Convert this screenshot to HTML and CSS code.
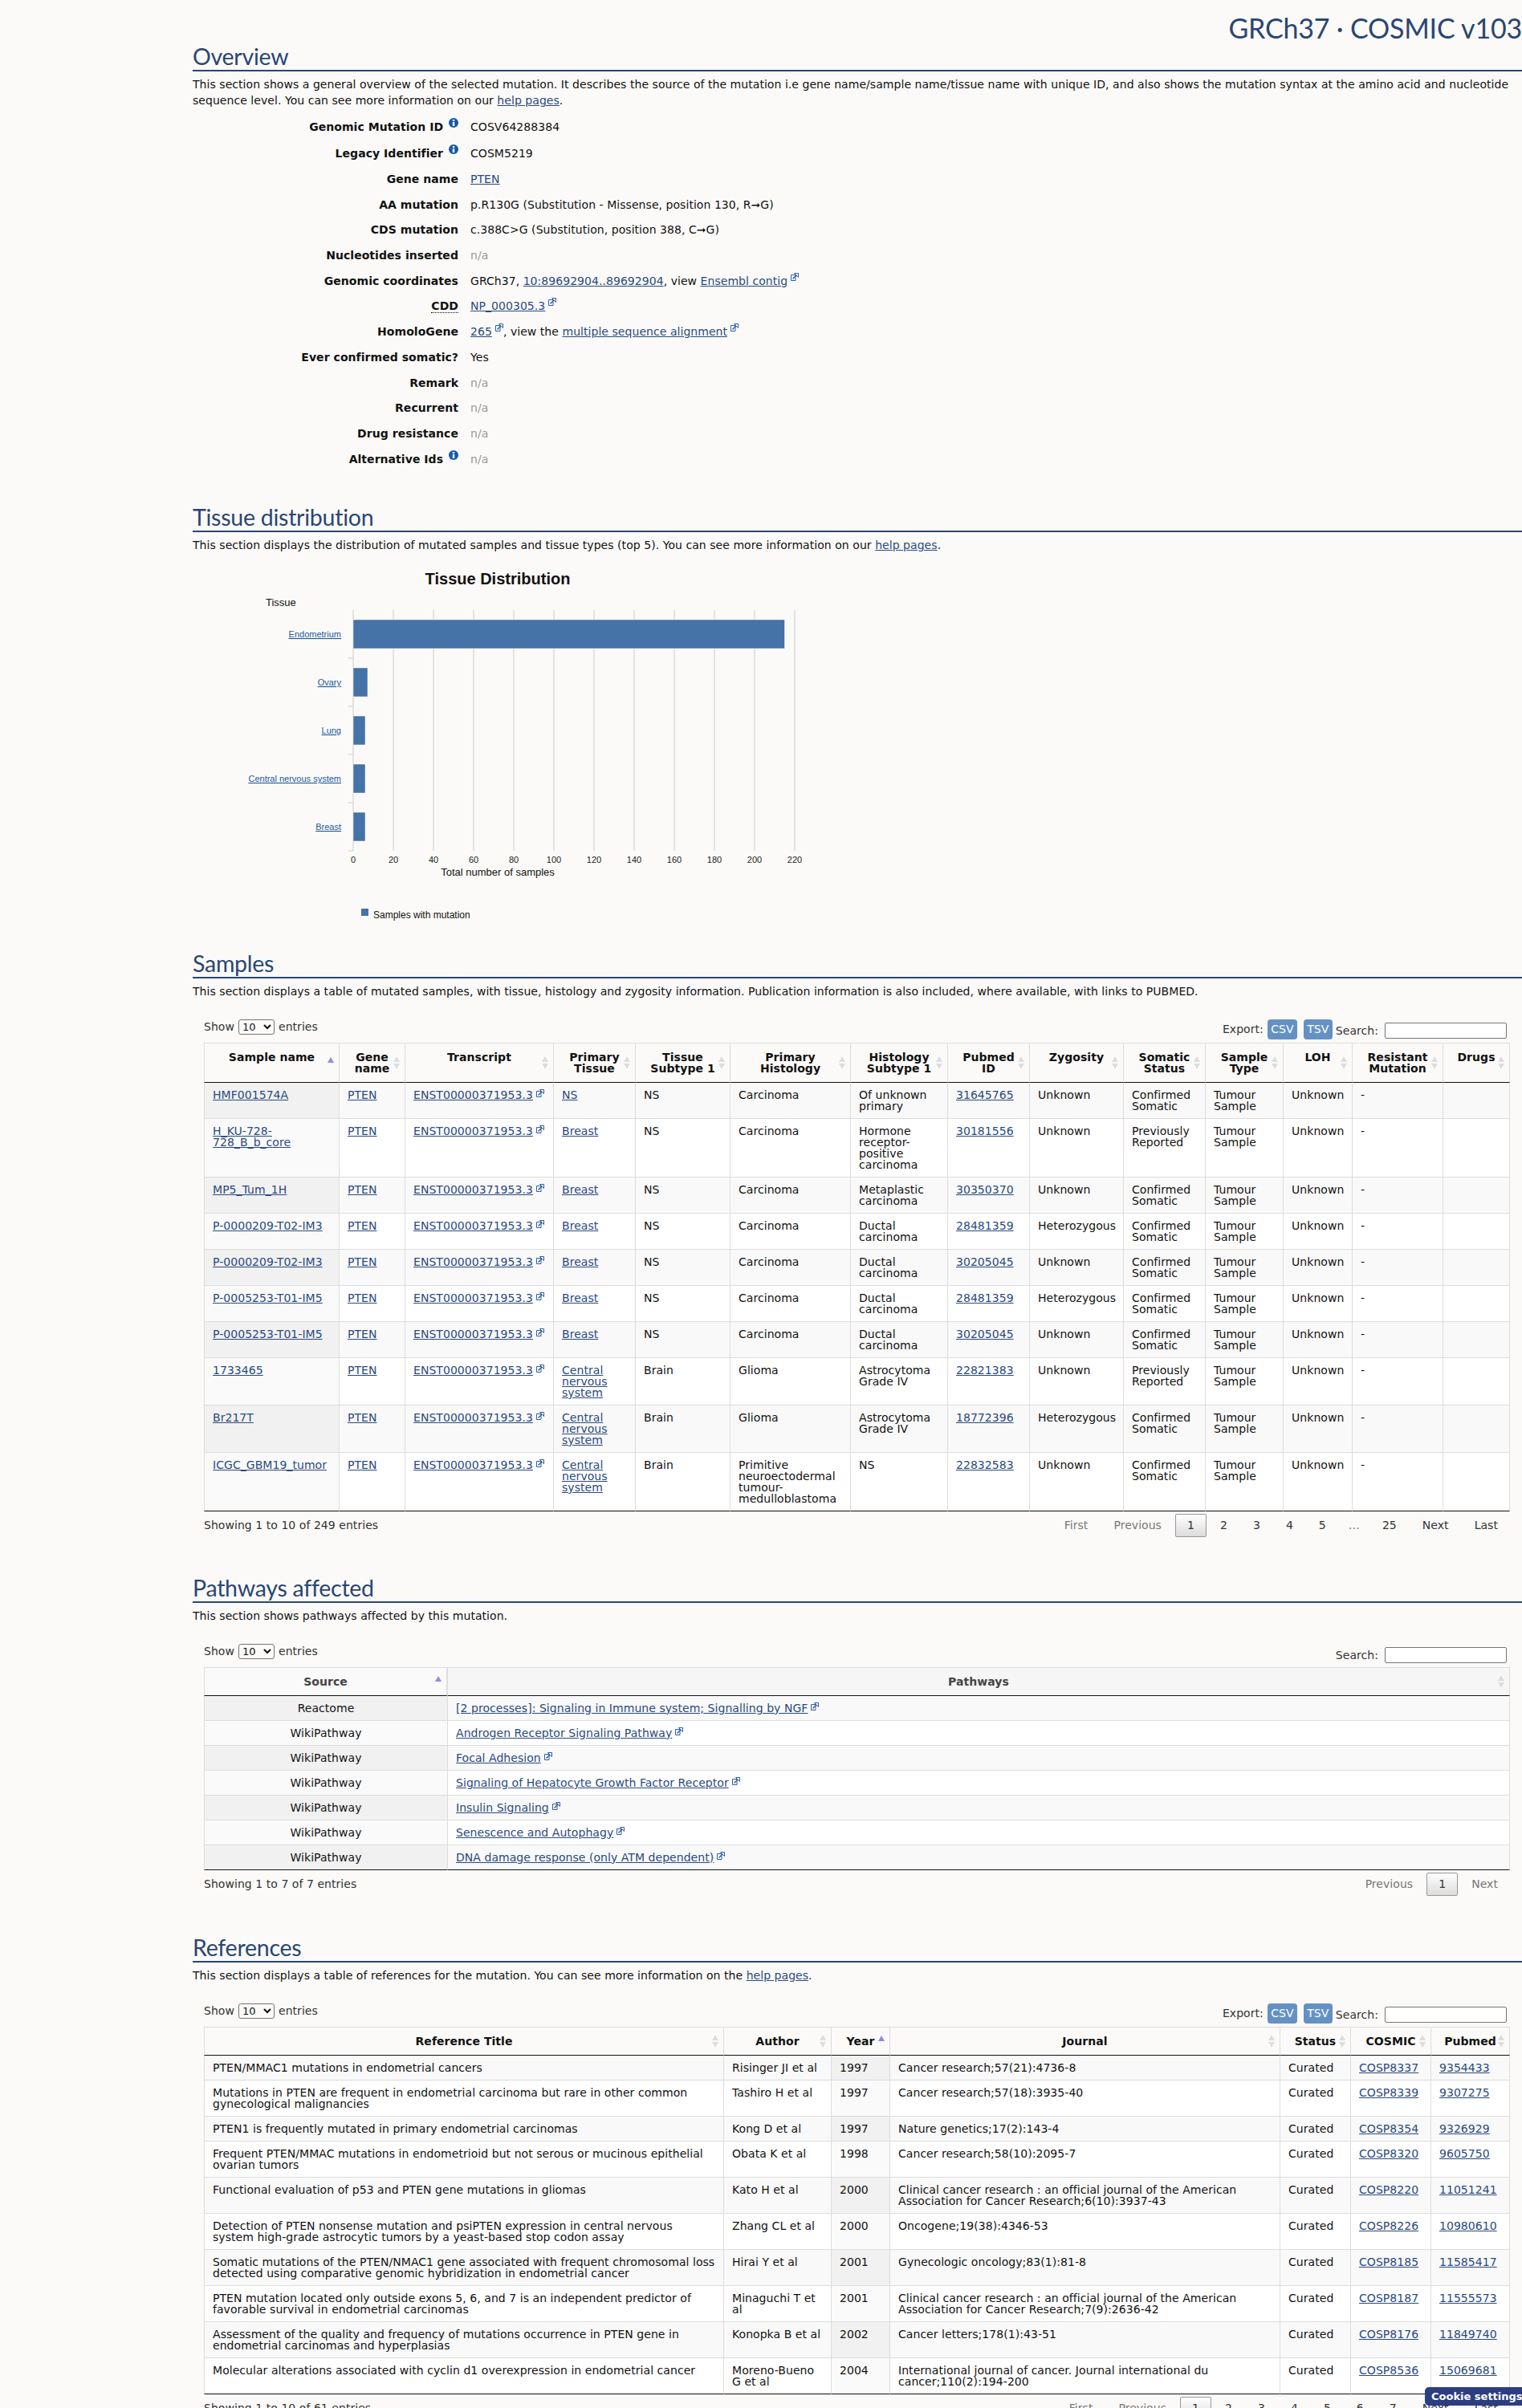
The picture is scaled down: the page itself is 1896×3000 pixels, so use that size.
FILE: index.html
```html
<!DOCTYPE html>
<html lang="en">
<head>
<meta charset="utf-8">
<title>COSMIC mutation overview</title>
<link rel="stylesheet" href="styles.css">
</head>
<body>
<svg class="defs" width="0" height="0" aria-hidden="true">
  <symbol id="ext" viewBox="0 0 10 10">
    <path d="M.5 2.500h5.500v7H.5z" fill="#fff" stroke="#2f5da8" stroke-width="1"/>
    <path d="M4.500 .5h5v5z" fill="#fff" stroke="#2f5da8" stroke-width="1"/>
    <path d="M2.500 7.500L7 3" fill="none" stroke="#2f5da8" stroke-width="1.400"/>
  </symbol>
  <symbol id="info" viewBox="0 0 12 12">
    <circle cx="6" cy="6" r="6" fill="#1559a6"/>
    <rect x="4.800" y="2" width="2.400" height="2" fill="#fff"/>
    <rect x="4.800" y="5" width="2.400" height="5" fill="#fff"/>
  </symbol>
</svg>
<main class="page">
  <div class="page-title">GRCh37 · COSMIC v103</div>

  <section class="section section-overview">
    <h2>Overview</h2>
    <p>This section shows a general overview of the selected mutation. It describes the source of the mutation i.e gene name/sample name/tissue name with unique ID, and also shows the mutation syntax at the amino acid and nucleotide sequence level. You can see more information on our <a href="#">help pages</a>.</p>
    <dl class="facts">
      <dt class="tall">Genomic Mutation ID <svg class="info"><use href="#info"/></svg></dt><dd class="tall">COSV64288384</dd>
      <dt class="tall">Legacy Identifier <svg class="info"><use href="#info"/></svg></dt><dd class="tall">COSM5219</dd>
      <dt>Gene name</dt><dd><a href="#">PTEN</a></dd>
      <dt>AA mutation</dt><dd>p.R130G (Substitution - Missense, position 130, R➞G)</dd>
      <dt>CDS mutation</dt><dd>c.388C&gt;G (Substitution, position 388, C➞G)</dd>
      <dt>Nucleotides inserted</dt><dd class="na">n/a</dd>
      <dt>Genomic coordinates</dt><dd>GRCh37, <a href="#">10:89692904..89692904</a>, view <a href="#">Ensembl contig</a><svg class="ext"><use href="#ext"/></svg></dd>
      <dt><abbr>CDD</abbr></dt><dd><a href="#">NP_000305.3</a><svg class="ext"><use href="#ext"/></svg></dd>
      <dt>HomoloGene</dt><dd><a href="#">265</a><svg class="ext"><use href="#ext"/></svg>, view the <a href="#">multiple sequence alignment</a><svg class="ext"><use href="#ext"/></svg></dd>
      <dt>Ever confirmed somatic?</dt><dd>Yes</dd>
      <dt>Remark</dt><dd class="na">n/a</dd>
      <dt>Recurrent</dt><dd class="na">n/a</dd>
      <dt>Drug resistance</dt><dd class="na">n/a</dd>
      <dt>Alternative Ids <svg class="info"><use href="#info"/></svg></dt><dd class="na">n/a</dd>
    </dl>
  </section>

  <section class="section-chart">
    <h2>Tissue distribution</h2>
    <p>This section displays the distribution of mutated samples and tissue types (top 5). You can see more information on our <a href="#">help pages</a>.</p>
    <svg class="chart" viewBox="240 695 1000 489" width="1000" height="489">
      <g class="grid">
        <path d="M440 760V1060M490 760V1060M540 760V1060M590 760V1060M640 760V1060M690 760V1060M740 760V1060M790 760V1060M840 760V1060M890 760V1060M940 760V1060M990 760V1060"/>
        <path d="M434 820H440M434 880H440M434 940H440M434 1000H440M434 1060H440"/>
      </g>
      <g class="bars">
        <rect x="440" y="772" width="537.500" height="36"/>
        <rect x="440" y="832" width="18" height="36"/>
        <rect x="440" y="892" width="15" height="36"/>
        <rect x="440" y="952" width="15" height="36"/>
        <rect x="440" y="1012" width="15" height="36"/>
      </g>
      <text class="c-title" x="620" y="728">Tissue Distribution</text>
      <text class="c-label" x="331" y="755">Tissue</text>
      <g class="c-links">
        <text x="425" y="794">Endometrium</text>
        <text x="425" y="854">Ovary</text>
        <text x="425" y="914">Lung</text>
        <text x="425" y="974">Central nervous system</text>
        <text x="425" y="1034">Breast</text>
      </g>
      <g class="c-ticks">
        <text x="440" y="1075">0</text><text x="490" y="1075">20</text><text x="540" y="1075">40</text><text x="590" y="1075">60</text><text x="640" y="1075">80</text><text x="690" y="1075">100</text><text x="740" y="1075">120</text><text x="790" y="1075">140</text><text x="840" y="1075">160</text><text x="890" y="1075">180</text><text x="940" y="1075">200</text><text x="990" y="1075">220</text>
      </g>
      <text class="c-axis" x="620" y="1091">Total number of samples</text>
      <rect class="c-key" x="450" y="1132" width="9" height="9"/>
      <text class="c-label small" x="465" y="1144">Samples with mutation</text>
    </svg>
  </section>

  <section class="section">
    <h2>Samples</h2>
    <p>This section displays a table of mutated samples, with tissue, histology and zygosity information. Publication information is also included, where available, with links to PUBMED.</p>
    <div class="controls">
      <label class="length">Show <select><option>10</option></select> entries</label>
      <div class="tools">
        <span>Export:</span><a class="btn" href="#">CSV</a><a class="btn btn-tsv" href="#">TSV</a>
        <label class="search">Search: <input type="text"></label>
      </div>
    </div>
    <table class="dt samples">
      <thead><tr>
        <th class="asc">Sample name</th><th class="sort">Gene name</th><th class="sort">Transcript</th><th class="sort">Primary Tissue</th><th class="sort">Tissue Subtype 1</th><th class="sort">Primary Histology</th><th class="sort">Histology Subtype 1</th><th class="sort">Pubmed ID</th><th class="sort">Zygosity</th><th class="sort">Somatic Status</th><th class="sort">Sample Type</th><th class="sort">LOH</th><th class="sort">Resistant Mutation</th><th class="sort">Drugs</th>
      </tr></thead>
      <tbody>
        <tr><td class="sorted"><a href="#">HMF001574A</a></td><td><a href="#">PTEN</a></td><td class="nw"><a href="#">ENST00000371953.3</a><svg class="ext"><use href="#ext"/></svg></td><td><a href="#">NS</a></td><td>NS</td><td>Carcinoma</td><td>Of unknown primary</td><td><a href="#">31645765</a></td><td>Unknown</td><td>Confirmed Somatic</td><td>Tumour Sample</td><td>Unknown</td><td>-</td><td></td></tr>
        <tr><td class="sorted"><a href="#">H_KU-728-<br>728_B_b_core</a></td><td><a href="#">PTEN</a></td><td class="nw"><a href="#">ENST00000371953.3</a><svg class="ext"><use href="#ext"/></svg></td><td><a href="#">Breast</a></td><td>NS</td><td>Carcinoma</td><td>Hormone<br>receptor-<br>positive<br>carcinoma</td><td><a href="#">30181556</a></td><td>Unknown</td><td>Previously Reported</td><td>Tumour Sample</td><td>Unknown</td><td>-</td><td></td></tr>
        <tr><td class="sorted"><a href="#">MP5_Tum_1H</a></td><td><a href="#">PTEN</a></td><td class="nw"><a href="#">ENST00000371953.3</a><svg class="ext"><use href="#ext"/></svg></td><td><a href="#">Breast</a></td><td>NS</td><td>Carcinoma</td><td>Metaplastic carcinoma</td><td><a href="#">30350370</a></td><td>Unknown</td><td>Confirmed Somatic</td><td>Tumour Sample</td><td>Unknown</td><td>-</td><td></td></tr>
        <tr><td class="sorted"><a href="#">P-0000209-T02-IM3</a></td><td><a href="#">PTEN</a></td><td class="nw"><a href="#">ENST00000371953.3</a><svg class="ext"><use href="#ext"/></svg></td><td><a href="#">Breast</a></td><td>NS</td><td>Carcinoma</td><td>Ductal carcinoma</td><td><a href="#">28481359</a></td><td>Heterozygous</td><td>Confirmed Somatic</td><td>Tumour Sample</td><td>Unknown</td><td>-</td><td></td></tr>
        <tr><td class="sorted"><a href="#">P-0000209-T02-IM3</a></td><td><a href="#">PTEN</a></td><td class="nw"><a href="#">ENST00000371953.3</a><svg class="ext"><use href="#ext"/></svg></td><td><a href="#">Breast</a></td><td>NS</td><td>Carcinoma</td><td>Ductal carcinoma</td><td><a href="#">30205045</a></td><td>Unknown</td><td>Confirmed Somatic</td><td>Tumour Sample</td><td>Unknown</td><td>-</td><td></td></tr>
        <tr><td class="sorted"><a href="#">P-0005253-T01-IM5</a></td><td><a href="#">PTEN</a></td><td class="nw"><a href="#">ENST00000371953.3</a><svg class="ext"><use href="#ext"/></svg></td><td><a href="#">Breast</a></td><td>NS</td><td>Carcinoma</td><td>Ductal carcinoma</td><td><a href="#">28481359</a></td><td>Heterozygous</td><td>Confirmed Somatic</td><td>Tumour Sample</td><td>Unknown</td><td>-</td><td></td></tr>
        <tr><td class="sorted"><a href="#">P-0005253-T01-IM5</a></td><td><a href="#">PTEN</a></td><td class="nw"><a href="#">ENST00000371953.3</a><svg class="ext"><use href="#ext"/></svg></td><td><a href="#">Breast</a></td><td>NS</td><td>Carcinoma</td><td>Ductal carcinoma</td><td><a href="#">30205045</a></td><td>Unknown</td><td>Confirmed Somatic</td><td>Tumour Sample</td><td>Unknown</td><td>-</td><td></td></tr>
        <tr><td class="sorted"><a href="#">1733465</a></td><td><a href="#">PTEN</a></td><td class="nw"><a href="#">ENST00000371953.3</a><svg class="ext"><use href="#ext"/></svg></td><td><a href="#">Central<br>nervous<br>system</a></td><td>Brain</td><td>Glioma</td><td>Astrocytoma Grade IV</td><td><a href="#">22821383</a></td><td>Unknown</td><td>Previously Reported</td><td>Tumour Sample</td><td>Unknown</td><td>-</td><td></td></tr>
        <tr><td class="sorted"><a href="#">Br217T</a></td><td><a href="#">PTEN</a></td><td class="nw"><a href="#">ENST00000371953.3</a><svg class="ext"><use href="#ext"/></svg></td><td><a href="#">Central<br>nervous<br>system</a></td><td>Brain</td><td>Glioma</td><td>Astrocytoma Grade IV</td><td><a href="#">18772396</a></td><td>Heterozygous</td><td>Confirmed Somatic</td><td>Tumour Sample</td><td>Unknown</td><td>-</td><td></td></tr>
        <tr><td class="sorted"><a href="#">ICGC_GBM19_tumor</a></td><td><a href="#">PTEN</a></td><td class="nw"><a href="#">ENST00000371953.3</a><svg class="ext"><use href="#ext"/></svg></td><td><a href="#">Central<br>nervous<br>system</a></td><td>Brain</td><td>Primitive<br>neuroectodermal<br>tumour-<br>medulloblastoma</td><td>NS</td><td><a href="#">22832583</a></td><td>Unknown</td><td>Confirmed Somatic</td><td>Tumour Sample</td><td>Unknown</td><td>-</td><td></td></tr>
      </tbody>
    </table>
    <div class="tfoot">
      <span>Showing 1 to 10 of 249 entries</span>
      <nav class="pager"><a class="off">First</a><a class="off">Previous</a><a class="cur">1</a><a>2</a><a>3</a><a>4</a><a>5</a><span class="dots">…</span><a>25</a><a>Next</a><a>Last</a></nav>
    </div>
  </section>

  <section class="section section-pathways">
    <h2>Pathways affected</h2>
    <p>This section shows pathways affected by this mutation.</p>
    <div class="controls">
      <label class="length">Show <select><option>10</option></select> entries</label>
      <div class="tools"><label class="search">Search: <input type="text"></label></div>
    </div>
    <table class="dt pathways">
      <thead><tr><th class="asc">Source</th><th class="sort">Pathways</th></tr></thead>
      <tbody>
        <tr><td class="sorted">Reactome</td><td><a href="#">[2 processes]: Signaling in Immune system; Signalling by NGF</a><svg class="ext"><use href="#ext"/></svg></td></tr>
        <tr><td class="sorted">WikiPathway</td><td><a href="#">Androgen Receptor Signaling Pathway</a><svg class="ext"><use href="#ext"/></svg></td></tr>
        <tr><td class="sorted">WikiPathway</td><td><a href="#">Focal Adhesion</a><svg class="ext"><use href="#ext"/></svg></td></tr>
        <tr><td class="sorted">WikiPathway</td><td><a href="#">Signaling of Hepatocyte Growth Factor Receptor</a><svg class="ext"><use href="#ext"/></svg></td></tr>
        <tr><td class="sorted">WikiPathway</td><td><a href="#">Insulin Signaling</a><svg class="ext"><use href="#ext"/></svg></td></tr>
        <tr><td class="sorted">WikiPathway</td><td><a href="#">Senescence and Autophagy</a><svg class="ext"><use href="#ext"/></svg></td></tr>
        <tr><td class="sorted">WikiPathway</td><td><a href="#">DNA damage response (only ATM dependent)</a><svg class="ext"><use href="#ext"/></svg></td></tr>
      </tbody>
    </table>
    <div class="tfoot">
      <span>Showing 1 to 7 of 7 entries</span>
      <nav class="pager"><a class="off">Previous</a><a class="cur">1</a><a class="off">Next</a></nav>
    </div>
  </section>

  <section class="section">
    <h2>References</h2>
    <p>This section displays a table of references for the mutation. You can see more information on the <a href="#">help pages</a>.</p>
    <div class="controls">
      <label class="length">Show <select><option>10</option></select> entries</label>
      <div class="tools">
        <span>Export:</span><a class="btn" href="#">CSV</a><a class="btn btn-tsv" href="#">TSV</a>
        <label class="search">Search: <input type="text"></label>
      </div>
    </div>
    <table class="dt refs">
      <thead><tr><th class="sort">Reference Title</th><th class="sort">Author</th><th class="asc">Year</th><th class="sort">Journal</th><th class="sort">Status</th><th class="sort">COSMIC</th><th class="sort">Pubmed</th></tr></thead>
      <tbody>
        <tr><td>PTEN/MMAC1 mutations in endometrial cancers</td><td>Risinger JI et al</td><td class="sorted">1997</td><td>Cancer research;57(21):4736-8</td><td>Curated</td><td><a href="#">COSP8337</a></td><td><a href="#">9354433</a></td></tr>
        <tr><td>Mutations in PTEN are frequent in endometrial carcinoma but rare in other common gynecological malignancies</td><td>Tashiro H et al</td><td class="sorted">1997</td><td>Cancer research;57(18):3935-40</td><td>Curated</td><td><a href="#">COSP8339</a></td><td><a href="#">9307275</a></td></tr>
        <tr><td>PTEN1 is frequently mutated in primary endometrial carcinomas</td><td>Kong D et al</td><td class="sorted">1997</td><td>Nature genetics;17(2):143-4</td><td>Curated</td><td><a href="#">COSP8354</a></td><td><a href="#">9326929</a></td></tr>
        <tr><td>Frequent PTEN/MMAC mutations in endometrioid but not serous or mucinous epithelial ovarian tumors</td><td>Obata K et al</td><td class="sorted">1998</td><td>Cancer research;58(10):2095-7</td><td>Curated</td><td><a href="#">COSP8320</a></td><td><a href="#">9605750</a></td></tr>
        <tr><td>Functional evaluation of p53 and PTEN gene mutations in gliomas</td><td>Kato H et al</td><td class="sorted">2000</td><td>Clinical cancer research : an official journal of the American Association for Cancer Research;6(10):3937-43</td><td>Curated</td><td><a href="#">COSP8220</a></td><td><a href="#">11051241</a></td></tr>
        <tr><td>Detection of PTEN nonsense mutation and psiPTEN expression in central nervous<br>system high-grade astrocytic tumors by a yeast-based stop codon assay</td><td>Zhang CL et al</td><td class="sorted">2000</td><td>Oncogene;19(38):4346-53</td><td>Curated</td><td><a href="#">COSP8226</a></td><td><a href="#">10980610</a></td></tr>
        <tr><td>Somatic mutations of the PTEN/NMAC1 gene associated with frequent chromosomal loss detected using comparative genomic hybridization in endometrial cancer</td><td>Hirai Y et al</td><td class="sorted">2001</td><td>Gynecologic oncology;83(1):81-8</td><td>Curated</td><td><a href="#">COSP8185</a></td><td><a href="#">11585417</a></td></tr>
        <tr><td>PTEN mutation located only outside exons 5, 6, and 7 is an independent predictor of favorable survival in endometrial carcinomas</td><td>Minaguchi T et al</td><td class="sorted">2001</td><td>Clinical cancer research : an official journal of the American Association for Cancer Research;7(9):2636-42</td><td>Curated</td><td><a href="#">COSP8187</a></td><td><a href="#">11555573</a></td></tr>
        <tr><td>Assessment of the quality and frequency of mutations occurrence in PTEN gene in endometrial carcinomas and hyperplasias</td><td>Konopka B et al</td><td class="sorted">2002</td><td>Cancer letters;178(1):43-51</td><td>Curated</td><td><a href="#">COSP8176</a></td><td><a href="#">11849740</a></td></tr>
        <tr><td>Molecular alterations associated with cyclin d1 overexpression in endometrial cancer</td><td>Moreno-Bueno G et al</td><td class="sorted">2004</td><td>International journal of cancer. Journal international du cancer;110(2):194-200</td><td>Curated</td><td><a href="#">COSP8536</a></td><td><a href="#">15069681</a></td></tr>
      </tbody>
    </table>
    <div class="tfoot">
      <span>Showing 1 to 10 of 61 entries</span>
      <nav class="pager"><a class="off">First</a><a class="off">Previous</a><a class="cur">1</a><a>2</a><a>3</a><a>4</a><a>5</a><a>6</a><a>7</a><a>Next</a><a>Last</a></nav>
    </div>
  </section>
</main>
<button class="cookie" type="button">Cookie settings</button>
</body>
</html>
```
FILE: styles.css
```css
html, body {
  margin: 0;
  height: 3000px;
  overflow: hidden;
}
body {
  position: relative;
  width: 1896px;
  background: #fbfaf8;
  color: #111;
  font: 14px/20px "DejaVu Sans", Verdana, sans-serif;
  letter-spacing: .05px;
}
a { color: #2a4a7f; text-decoration: underline; }
.defs { position: absolute; }
.page {
  box-sizing: border-box;
  width: 1896px;
  padding-left: 240px;
}
.page-title {
  box-sizing: border-box;
  height: 54px;
  padding-top: 14px;
  text-align: right;
  font: 400 34px/42px Lato, "Open Sans", sans-serif;
  letter-spacing: -.2px;
  color: #2a4673;
}
h2 {
  margin: 0;
  height: 33px;
  border-bottom: 2px solid #2a4673;
  font: 400 28.500px/32px Lato, "Open Sans", sans-serif;
  letter-spacing: -.25px;
  color: #2a4673;
}
p { margin: 6px 0 0; }
.section { margin-bottom: 47px; }
.section-pathways { margin-bottom: 48px; }
.section-overview { margin-bottom: 39.600px; }

/* Overview facts */
.facts {
  display: grid;
  grid-template-columns: 331px 1fr;
  grid-template-rows: 33px 33px;
  grid-auto-rows: 31.700px;
  column-gap: 15px;
  margin: 7px 0 0;
}
.facts dt, .facts dd { margin: 0; line-height: 31.700px; white-space: nowrap; }
.facts dt { text-align: right; font-weight: 700; }
.facts .tall { height: 33px; line-height: 33px; }
.facts dt .info { margin-left: 2px; }
.facts .ext { vertical-align: 5px; }
.na { color: #999; }
abbr { border-bottom: 1px dotted #111; text-decoration: none; }
.info { width: 12px; height: 12px; vertical-align: 4px; }
.ext { width: 10px; height: 10px; margin-left: 4px; vertical-align: 2px; }

/* Chart */
.chart { display: block; margin-top: 6px; }
.grid path { stroke: #dcdcdc; stroke-width: 1.500; fill: none; }
.bars rect { fill: #4572a7; stroke: #fff; stroke-width: .5; }
.chart text { font-family: "Liberation Sans", Arial, sans-serif; fill: #111; letter-spacing: 0; }
.c-title { font-size: 20px; font-weight: 700; text-anchor: middle; }
.c-label { font-size: 13px; }
.c-label.small { font-size: 12px; }
.c-links text { font-size: 11px; text-anchor: end; fill: #1b5a9c; text-decoration: underline; }
.c-ticks text { font-size: 11px; text-anchor: middle; fill: #222; }
.c-axis { font-size: 13px; text-anchor: middle; }
.c-key { fill: #4572a7; }

/* Data-table controls */
.controls {
  display: flex;
  justify-content: space-between;
  align-items: flex-start;
  box-sizing: border-box;
  height: 29px;
  margin: 25px 0 0 14px;
  padding-right: 4px;
  width: 1627px;
  color: #333;
}
.length { display: flex; align-items: center; gap: 5px; height: 19px; line-height: 19px; }
.length select {
  width: 45px;
  height: 19px;
  padding: 0;
  border: 1px solid #767676;
  border-radius: 3px;
  background: transparent;
  font: 13px "DejaVu Sans", sans-serif;
  color: #111;
}
.tools { display: flex; align-items: flex-start; line-height: 25px; }
.btn {
  display: block;
  box-sizing: border-box;
  width: 37px;
  height: 25px;
  margin-left: 5px;
  border-radius: 4px;
  background: #6391c5;
  color: #fff;
  text-align: center;
  text-decoration: none;
}
.btn-tsv { margin-left: 8px; width: 36px; }
.search { display: flex; align-items: flex-start; gap: 8px; margin-left: 4px; line-height: 28px; }
.search input {
  box-sizing: border-box;
  width: 152px;
  height: 20px;
  margin: 4px 0 0;
  padding: 0;
  border: 1px solid #767676;
  border-radius: 2px;
  background: #fff;
}

/* Tables */
.dt {
  table-layout: fixed;
  border-collapse: separate;
  border-spacing: 0;
  width: 1627px;
  margin-left: 14px;
  line-height: 14px;
}
.dt th {
  position: relative;
  padding: 10px;
  border-top: 1px solid #ddd;
  border-right: 1px solid #ddd;
  border-bottom: 1px solid #111;
  font-weight: 700;
  text-align: center;
  vertical-align: top;
}
.dt th:first-child, .dt td:first-child { border-left: 1px solid #ddd; }
.dt td {
  padding: 8px 10px;
  border-top: 1px solid #ddd;
  border-right: 1px solid #ddd;
  vertical-align: top;
}
.dt tbody tr:first-child td { border-top: 0; }
.dt tbody tr:last-child td { border-bottom: 1px solid #111; }
.dt tbody tr:nth-child(odd) td { background: #f9f9f9; }
.dt tbody tr:nth-child(even) td { background: #fff; }
.dt tbody tr:nth-child(odd) td.sorted { background: #f1f1f1; }
.dt tbody tr:nth-child(even) td.sorted { background: #fafafa; }
.nw { white-space: nowrap; }

.dt th.sort::before, .dt th.sort::after, .dt th.asc::before {
  content: "";
  position: absolute;
  right: 6px;
  top: 50%;
  border-left: 4px solid transparent;
  border-right: 4px solid transparent;
}
.dt th.sort::before { margin-top: -8px; border-bottom: 7px solid #ddd; }
.dt th.sort::after { margin-top: 1px; border-top: 7px solid #ddd; }
.dt th.asc::before { margin-top: -7px; border-bottom: 7px solid #8d8de0; }

.samples th:nth-child(1) { width: 147px; }
.samples th:nth-child(2) { width: 61px; }
.samples th:nth-child(3) { width: 164px; }
.samples th:nth-child(4) { width: 81px; }
.samples th:nth-child(5) { width: 97px; }
.samples th:nth-child(6) { width: 129px; }
.samples th:nth-child(7) { width: 100px; }
.samples th:nth-child(8) { width: 81px; }
.samples th:nth-child(9) { width: 96px; }
.samples th:nth-child(10) { width: 81px; }
.samples th:nth-child(11) { width: 76px; }
.samples th:nth-child(12) { width: 65px; }
.samples th:nth-child(13) { width: 92px; }

.pathways th { color: #444; }
.pathways th:nth-child(1) { background: #fafafa; border-right: 2px solid #ddd; width: 281px; }
.pathways th:nth-child(2) { background: #f6f6f6; }
.pathways td:first-child { text-align: center; }

.refs th:nth-child(1) { width: 626px; }
.refs th:nth-child(2) { width: 113px; }
.refs th:nth-child(3) { width: 52px; }
.refs th:nth-child(4) { width: 465px; }
.refs th:nth-child(5) { width: 67px; }
.refs th:nth-child(6) { width: 79px; }

/* Footer of each table */
.tfoot {
  display: flex;
  justify-content: space-between;
  align-items: center;
  box-sizing: border-box;
  width: 1627px;
  height: 29px;
  margin: 3px 0 0 14px;
  color: #333;
}
.pager { display: flex; align-items: center; }
.pager a, .pager .dots {
  box-sizing: border-box;
  height: 29px;
  min-width: 25px;
  margin-left: 2px;
  padding: 0 14px;
  border: 1px solid transparent;
  border-radius: 2px;
  line-height: 27px;
  text-align: center;
  color: #333;
  text-decoration: none;
}
.pager .off { color: #777; }
.pager .dots { padding: 0 10px; color: #777; }
.pager .cur {
  border-color: #979797;
  background: linear-gradient(#fff, #dcdcdc);
}

.cookie {
  position: absolute;
  right: 0;
  top: 2974px;
  width: 121px;
  height: 23px;
  padding: 0 0 0 8px;
  border: 0;
  border-radius: 5px 0 0 5px;
  background: #2d3e80;
  color: #fff;
  font: 700 13px/23px "DejaVu Sans", sans-serif;
  letter-spacing: 0;
  text-align: left;
  white-space: nowrap;
  overflow: hidden;
}
```
